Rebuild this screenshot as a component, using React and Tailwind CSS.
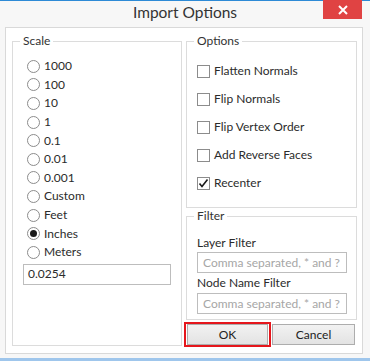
import React from 'react';

const scales = ["1000", "100", "10", "1", "0.1", "0.01", "0.001", "Custom", "Feet", "Inches", "Meters"];
const options = [
    { label: "Flatten Normals", checked: false },
    { label: "Flip Normals", checked: false },
    { label: "Flip Vertex Order", checked: false },
    { label: "Add Reverse Faces", checked: false },
    { label: "Recenter", checked: true },
];

const Radio = ({ selected }) => (
    <span className="w-[13px] h-[13px] rounded-full border border-[#8c8c8c] bg-white flex items-center justify-center shrink-0">
        {selected && <span className="w-[7px] h-[7px] rounded-full bg-[#1a1a1a]"></span>}
    </span>
);

const Checkbox = ({ checked }) => (
    <span className="w-[13px] h-[13px] border border-[#8c8c8c] bg-white flex items-center justify-center shrink-0">
        {checked && (
            <svg width="11" height="11" viewBox="0 0 11 11">
                <path d="M1.5 5.5 L4 8.5 L9.5 1.5" fill="none" stroke="#1a1a1a" strokeWidth="1.6" />
            </svg>
        )}
    </span>
);

const App = () => {
    return (
        <div className="w-[370px] h-[361px] bg-[#f7f7f7] flex flex-col overflow-hidden text-[12px] text-[#2b2b2b] font-['Lato',sans-serif]">
            <div className="h-[1px] bg-[#2d8ad6]"></div>

            {/* Title bar */}
            <div className="h-[26px] relative flex items-center justify-center">
                <span className="text-[15.5px] text-[#333] -mt-[2px]">Import Options</span>
                <div className="absolute -top-[1px] left-[323px] w-[39px] h-[19px] bg-[#e04343] flex items-center justify-center">
                    <svg width="10" height="10" viewBox="0 0 10 10">
                        <path d="M1 1 L9 9 M9 1 L1 9" stroke="white" strokeWidth="2" />
                    </svg>
                </div>
            </div>

            {/* Client area */}
            <div className="ml-[5px] w-[358px] h-[327px] bg-white border border-[#d9d9d9] flex gap-[4px] pt-[5px] pl-[6px]">

                {/* Scale */}
                <fieldset className="w-[170px] h-[313px] border border-[#dcdcdc]">
                    <legend className="ml-[7px] px-[3px] h-[16px] leading-[16px] text-[#333]">Scale</legend>
                    <div className="pl-[10px] pt-[8px]">
                        <div className="pl-[4px] flex flex-col">
                            {scales.map((s) => (
                                <div key={s} className="h-[18.6px] flex items-center gap-[4px]">
                                    <Radio selected={s === "Inches"} />
                                    <span>{s}</span>
                                </div>
                            ))}
                        </div>
                        <div className="mt-[2px] w-[148px] h-[21px] border border-[#bdbdbd] flex items-center pl-[4px]">0.0254</div>
                    </div>
                </fieldset>

                {/* Right column */}
                <div className="w-[171px] flex flex-col">
                    <fieldset className="h-[175px] border border-[#dcdcdc]">
                        <legend className="ml-[7px] px-[3px] h-[16px] leading-[16px] text-[#333]">Options</legend>
                        <div className="pl-[10px] pt-[8px] flex flex-col">
                            {options.map((o) => (
                                <div key={o.label} className="h-[28px] flex items-center gap-[4px]">
                                    <Checkbox checked={o.checked} />
                                    <span>{o.label}</span>
                                </div>
                            ))}
                        </div>
                    </fieldset>

                    <fieldset className="h-[112px] border border-[#dcdcdc]">
                        <legend className="ml-[7px] px-[3px] h-[16px] leading-[16px] text-[#333]">Filter</legend>
                        <div className="pl-[10px] pt-[11px] flex flex-col">
                            <div className="h-[16px] leading-[16px]">Layer Filter</div>
                            <div className="mt-[1px] w-[150px] h-[21px] border border-[#bdbdbd] flex items-center pl-[5px] text-[#a6a6a6]">Comma separated, * and ?</div>
                            <div className="mt-[2px] h-[16px] leading-[16px]">Node Name Filter</div>
                            <div className="mt-[2px] w-[150px] h-[21px] border border-[#bdbdbd] flex items-center pl-[5px] text-[#a6a6a6]">Comma separated, * and ?</div>
                        </div>
                    </fieldset>

                    <div className="mt-[2px] flex">
                        <div className="-ml-[2px] border-2 border-[#e5161c] px-[1px]">
                            <button className="w-[81px] h-[21px] border border-[#adadad] bg-gradient-to-b from-[#f2f2f2] to-[#e3e3e3] text-[#222] flex items-center justify-center">OK</button>
                        </div>
                        <button className="ml-[1px] mt-[2px] w-[83px] h-[21px] border border-[#adadad] bg-gradient-to-b from-[#f2f2f2] to-[#e3e3e3] text-[#222] flex items-center justify-center">Cancel</button>
                    </div>
                </div>
            </div>

            <div className="flex-1"></div>
            <div className="h-[3px] bg-[#9fc6ec]"></div>
        </div>
    );
};

export default App;
